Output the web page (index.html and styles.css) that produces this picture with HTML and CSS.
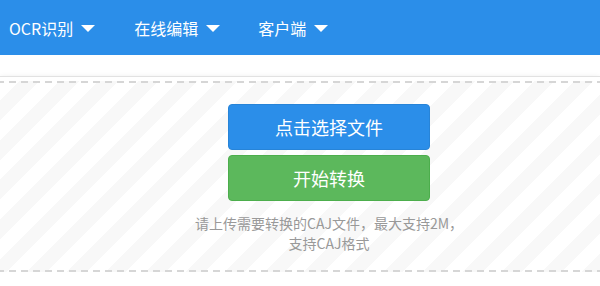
FILE: index.html
```html
<!DOCTYPE html>
<html lang="zh-CN">
<head>
<meta charset="utf-8">
<title>CAJ转换</title>
<link rel="stylesheet" href="styles.css">
</head>
<body>
<header class="topbar">
  <nav class="nav">
    <a class="nav-item">OCR识别<span class="caret"></span></a>
    <a class="nav-item">在线编辑<span class="caret"></span></a>
    <a class="nav-item">客户端<span class="caret"></span></a>
  </nav>
</header>
<main class="main">
  <section class="card">
    <div class="drop">
      <div class="content">
        <button class="btn btn-blue">点击选择文件</button>
        <button class="btn btn-green">开始转换</button>
        <p class="hint">请上传需要转换的CAJ文件，最大支持2M，<br>支持CAJ格式</p>
      </div>
    </div>
  </section>
</main>
</body>
</html>
```
FILE: styles.css
```css
html, body {
  margin: 0;
  padding: 0;
  background: #fff;
  overflow: hidden;
}
body {
  font-family: "Noto Sans CJK SC", "Microsoft YaHei", "Noto Sans", sans-serif;
}
.topbar {
  height: 55px;
  background: #2b8ee9;
}
.nav {
  height: 55px;
  display: flex;
  align-items: center;
  padding-left: 9px;
}
.nav-item {
  display: flex;
  align-items: center;
  gap: 8px;
  margin-right: 38px;
  color: #fff;
  font-size: 16px;
  line-height: 20px;
}
.nav-item:first-child {
  margin-right: 39px;
}
.caret {
  width: 0;
  height: 0;
  border-left: 7px solid transparent;
  border-right: 7px solid transparent;
  border-top: 7px solid #fff;
  margin-top: 1px;
}
.main {
  padding-top: 21px;
}
.card {
  border-top: 1px solid #e2e2e2;
  padding: 4px 0;
  background: #fff;
  box-shadow: 0 2px 6px rgba(0, 0, 0, 0.13);
}
.drop {
  padding: 23px 0 19px;
  background-image:
    linear-gradient(to right, #d6d6d6 7px, transparent 7px),
    linear-gradient(to right, #d6d6d6 7px, transparent 7px),
    repeating-linear-gradient(135deg, #fff 0 14px, #f8f8f8 14px 28px);
  background-size: 12px 2px, 12px 2px, auto;
  background-repeat: repeat-x, repeat-x, repeat;
  background-position: -3px top, -3px bottom, 0 0;
}
.content {
  display: flex;
  flex-direction: column;
  align-items: center;
  padding-left: 58px;
}
.btn {
  box-sizing: border-box;
  width: 202px;
  height: 46px;
  border-radius: 4px;
  font-family: inherit;
  font-size: 18px;
  color: #fff;
  padding: 0;
  cursor: pointer;
}
.btn-blue {
  background: #2b8ee9;
  border: 1px solid #2784d8;
}
.btn-green {
  margin-top: 5px;
  background: #5cb85c;
  border: 1px solid #4cae4c;
}
.hint {
  margin: 12px 0 0;
  font-size: 14px;
  line-height: 20px;
  color: #999;
  text-align: center;
}
```
